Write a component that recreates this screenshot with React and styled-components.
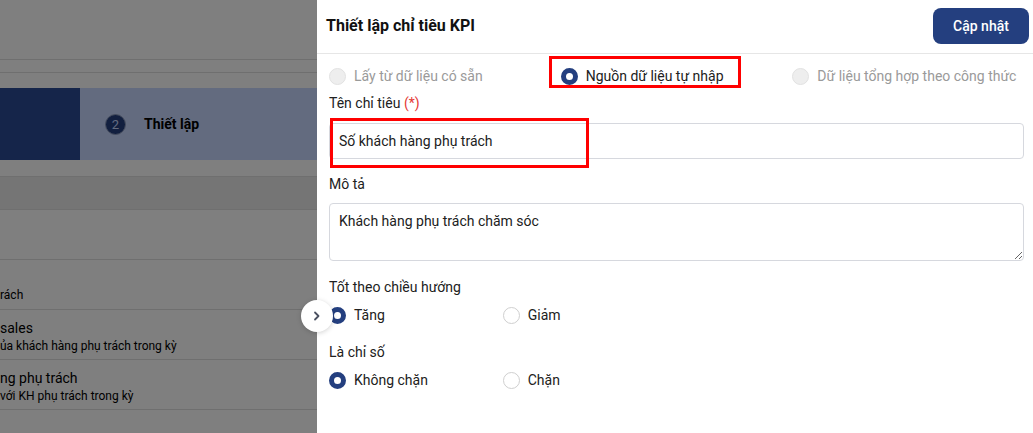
import React from 'react';
import styled, { createGlobalStyle } from 'styled-components';

const GlobalStyle = createGlobalStyle`
  html, body {
    margin: 0;
    padding: 0;
    background: #ffffff;
  }
  body {
    font-family: Roboto, "Noto Sans", "Liberation Sans", sans-serif;
    color: #212121;
  }
  * {
    box-sizing: border-box;
  }
`;

const Screen = styled.div`
  position: relative;
  width: 1033px;
  height: 433px;
  overflow: hidden;
  background: #ffffff;
`;

/* ---------- page behind the drawer ---------- */

const Page = styled.div`
  display: flex;
  flex-direction: column;
  width: 100%;
  height: 100%;
`;

const TopArea = styled.div`
  height: 59px;
`;

const Rule = styled.div`
  height: ${props => props.h || 13}px;
  border-top: 1px solid #dedede;
`;

const Steps = styled.div`
  display: flex;
  height: 72px;
  margin-top: -1px;
`;

const Step = styled.div`
  display: flex;
  align-items: center;
  gap: 18px;
  width: ${props => props.w}px;
  padding-left: 25px;
  background: ${props => (props.active ? '#2a4a94' : '#c6d6fe')};
  font-size: 14px;
  font-weight: 700;
  color: #000000;
`;

const StepNum = styled.span`
  display: flex;
  align-items: center;
  justify-content: center;
  width: 21px;
  height: 21px;
  border-radius: 50%;
  background: #243f7f;
  border: 1px solid #8d9bbd;
  color: #c6d6fe;
  font-size: 13px;
  font-weight: 400;
`;

const Spacer = styled.div`
  height: ${props => props.h}px;
`;

const Section = styled.div`
  height: 34px;
  background: #ebebeb;
  border-top: 1px solid #dedede;
  border-bottom: 1px solid #dedede;
`;

const List = styled.div`
  display: flex;
  flex-direction: column;
  margin-top: 49px;
  border-top: 1px solid #dedede;
`;

const ListRow = styled.div`
  display: flex;
  flex-direction: column;
  justify-content: center;
  height: 50px;
  border-bottom: 1px solid #dedede;
  padding-top: ${props => (props.single ? '20px' : '4px')};
`;

const RowTitle = styled.div`
  font-size: 14px;
  line-height: 18px;
  color: #000000;
`;

const RowSub = styled.div`
  font-size: 12px;
  line-height: 18px;
  color: #000000;
`;

const Overlay = styled.div`
  position: absolute;
  inset: 0;
  background: rgba(0, 0, 0, 0.5);
`;

/* ---------- drawer ---------- */

const Drawer = styled.aside`
  position: absolute;
  top: 0;
  right: 0;
  bottom: 0;
  width: 716px;
  background: #ffffff;
  display: flex;
  flex-direction: column;
`;

const Header = styled.header`
  display: flex;
  align-items: center;
  justify-content: space-between;
  height: 54px;
  padding: 0 4px 0 9px;
  border-bottom: 1px solid #e6e6e6;
`;

const Title = styled.h2`
  margin: 0 0 2px;
  font-size: 16px;
  font-weight: 700;
  color: #111111;
`;

const SaveButton = styled.button`
  width: 96px;
  height: 36px;
  margin-bottom: 1px;
  border: none;
  border-radius: 8px;
  background: #243f7f;
  color: #ffffff;
  font-family: inherit;
  font-size: 14px;
  font-weight: 500;
`;

const Body = styled.div`
  display: flex;
  flex-direction: column;
  padding: 12px 9px 0 12px;
`;

const RadioGrid = styled.div`
  display: grid;
  grid-template-columns: repeat(${props => props.cols}, 1fr);
  height: 20px;
  margin-top: ${props => props.mt || 0}px;
`;

const Option = styled.label`
  position: relative;
  display: flex;
  align-items: center;
  gap: 8px;
  font-size: 14px;
  color: ${props => (props.disabled ? '#9a9a9a' : '#212121')};
  white-space: nowrap;
`;

const Dot = styled.span`
  flex: none;
  width: 17px;
  height: 17px;
  border-radius: 50%;
  background: ${props => (props.disabled ? '#eeeeee' : '#ffffff')};
  border: ${props =>
    props.checked ? '5px solid #243f7f' : `1px solid ${props.disabled ? '#e2e2e2' : '#cfcfcf'}`};
`;

const Mark = styled.span`
  position: absolute;
  left: ${props => props.l}px;
  top: ${props => props.t}px;
  width: ${props => props.w}px;
  height: ${props => props.h}px;
  border: 3px solid #ff0000;
  pointer-events: none;
`;

const Label = styled.div`
  height: 20px;
  line-height: 20px;
  font-size: 14px;
  color: #212121;
  margin-top: ${props => props.mt || 0}px;
`;

const Req = styled.span`
  color: #e53935;
`;

const FieldWrap = styled.div`
  position: relative;
  margin-top: ${props => props.mt || 0}px;
`;

const Input = styled.div`
  display: flex;
  align-items: center;
  height: 36px;
  padding: 0 9px;
  border: 1px solid #d6d8de;
  border-radius: 4px;
  font-size: 14px;
  color: #212121;
`;

const TextArea = styled.textarea`
  display: block;
  width: 100%;
  height: 58px;
  padding: 8px 9px;
  border: 1px solid #d6d8de;
  border-radius: 4px;
  font-family: inherit;
  font-size: 14px;
  line-height: 18px;
  color: #212121;
  resize: vertical;
  outline: none;
`;

const Toggle = styled.button`
  position: absolute;
  left: 301px;
  top: 300px;
  width: 32px;
  height: 32px;
  padding: 0;
  border: none;
  border-radius: 50%;
  background: #ffffff;
  box-shadow: 0 1px 5px rgba(0, 0, 0, 0.18);
  display: flex;
  align-items: center;
  justify-content: center;
`;

function Radio({ checked, disabled, children, mark }) {
  return (
    <Option disabled={disabled}>
      <Dot checked={checked} disabled={disabled} />
      {children}
      {mark}
    </Option>
  );
}

export default function App() {
  return (
    <Screen>
      <GlobalStyle />
      <Page>
        <TopArea />
        <Rule h={13} />
        <Rule h={17} />
        <Steps>
          <Step active w={80} />
          <Step w={953}>
            <StepNum>2</StepNum>
            Thiết lập
          </Step>
        </Steps>
        <Spacer h={16} />
        <Section />
        <List>
          <ListRow single>
            <RowSub>rách</RowSub>
          </ListRow>
          <ListRow>
            <RowTitle>sales</RowTitle>
            <RowSub>ủa khách hàng phụ trách trong kỳ</RowSub>
          </ListRow>
          <ListRow>
            <RowTitle>ng phụ trách</RowTitle>
            <RowSub>với KH phụ trách trong kỳ</RowSub>
          </ListRow>
        </List>
      </Page>
      <Overlay />

      <Drawer>
        <Header>
          <Title>Thiết lập chỉ tiêu KPI</Title>
          <SaveButton>Cập nhật</SaveButton>
        </Header>
        <Body>
          <RadioGrid cols={3}>
            <Radio disabled>Lấy từ dữ liệu có sẵn</Radio>
            <Radio checked mark={<Mark l={-12} t={-10} w={192} h={32} />}>
              Nguồn dữ liệu tự nhập
            </Radio>
            <Radio disabled>Dữ liệu tổng hợp theo công thức</Radio>
          </RadioGrid>

          <Label mt={7}>
            Tên chỉ tiêu <Req>(*)</Req>
          </Label>
          <FieldWrap mt={10}>
            <Input>Số khách hàng phụ trách</Input>
            <Mark l={1} t={-5} w={259} h={50} />
          </FieldWrap>

          <Label mt={15}>Mô tả</Label>
          <FieldWrap mt={9}>
            <TextArea defaultValue="Khách hàng phụ trách chăm sóc" />
          </FieldWrap>

          <Label mt={16}>Tốt theo chiều hướng</Label>
          <RadioGrid cols={4} mt={8}>
            <Radio checked>Tăng</Radio>
            <Radio>Giảm</Radio>
          </RadioGrid>

          <Label mt={17}>Là chỉ số</Label>
          <RadioGrid cols={4} mt={8}>
            <Radio checked>Không chặn</Radio>
            <Radio>Chặn</Radio>
          </RadioGrid>
        </Body>
      </Drawer>

      <Toggle aria-label="Thu gọn">
        <svg width="12" height="12" viewBox="0 0 12 12" fill="none">
          <path d="M4 2.5 L7.5 6 L4 9.5" stroke="#4a5060" strokeWidth="1.8" strokeLinecap="round" strokeLinejoin="round" />
        </svg>
      </Toggle>
    </Screen>
  );
}
